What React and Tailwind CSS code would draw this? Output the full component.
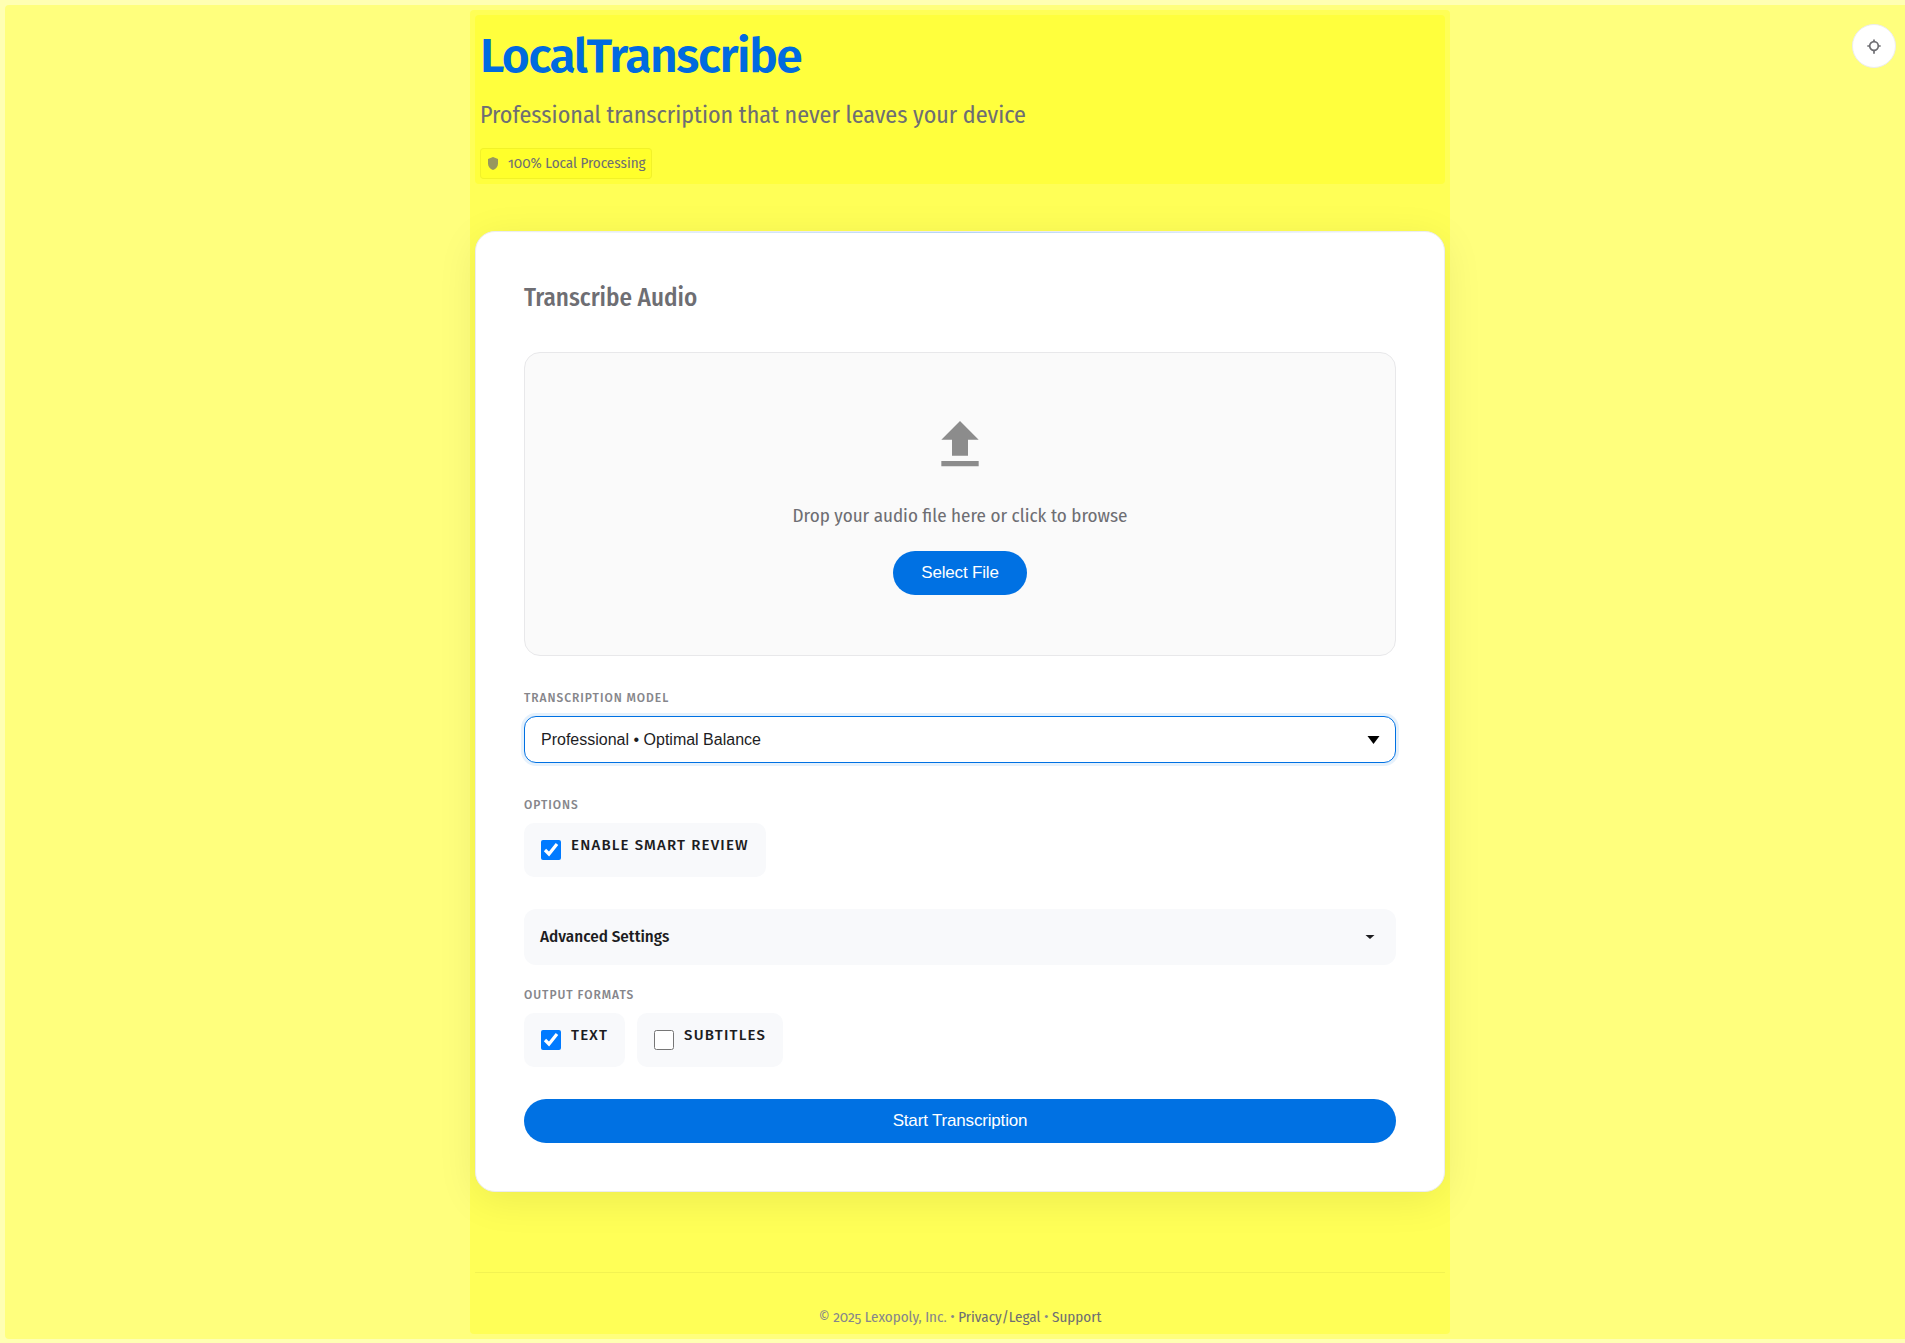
import React from "react";

function FieldLabel({ as: Tag = "span", children, ...rest }) {
  return (
    <Tag
      {...rest}
      className="mb-2 block text-[12px] font-medium uppercase leading-5 tracking-[0.08em] text-[#86868b]"
    >
      {children}
    </Tag>
  );
}

function CheckOption({ label, defaultChecked = false }) {
  return (
    <label className="inline-flex cursor-pointer items-start gap-2.5 rounded-[10px] bg-[#f8f9fb] px-[17px] pb-[17px] pt-3 text-[15px] font-medium uppercase leading-5 tracking-[0.08em] text-[#1d1d1f]">
      <input
        type="checkbox"
        defaultChecked={defaultChecked}
        className="mt-[5px] size-5 shrink-0 accent-[#007aff]"
      />
      {label}
    </label>
  );
}

export default function App() {
  return (
    <div className="overflow-x-clip">
      <div className="-mr-[15px] min-h-screen bg-[#ffffb3] p-[5px] font-['Fira_Sans','Noto_Sans',sans-serif] text-[#1d1d1f]">
        <main className="min-h-[calc(100vh-10px)] rounded bg-[#ffff7d] p-[5px]">
          <button
            type="button"
            aria-label="Toggle theme"
            className="fixed right-[9px] top-6 flex size-11 items-center justify-center rounded-full border border-[#ececf0] bg-white text-[#6e6e73]"
          >
            <svg width="20" height="20" viewBox="0 0 20 20" fill="none" stroke="currentColor" strokeWidth="1.7" aria-hidden="true">
              <circle cx="10" cy="10" r="4.3" />
              <path d="M10 3.4v2.4M10 14.2v3.6M3.3 10h2.6M14.1 10h2.6" />
            </svg>
          </button>

          <div className="mx-auto max-w-[980px] rounded bg-[#ffff57] p-[5px]">
            <header className="mb-[47px] rounded bg-[#ffff3d] p-[5px]">
              <h1 className="text-[48px] font-semibold leading-[72px] tracking-[-0.03em] text-[#006ae0]">
                LocalTranscribe
              </h1>
              <p className="mt-[5px] font-['Fira_Sans_Condensed','Roboto',sans-serif] text-[24px] leading-9 text-[#6e6e73]">
                Professional transcription that never leaves your device
              </p>
              <div className="mt-[15px] inline-flex h-[31px] items-center gap-2.5 rounded border border-black/5 bg-[#ffff2b] pl-[7px] pr-[5px] align-top font-['Fira_Sans_Condensed','Roboto',sans-serif] text-[15px] oldstyle-nums text-[#6e6e73]">
                <svg width="10" height="13" viewBox="0 0 10 13" fill="#98985e" aria-hidden="true">
                  <path d="M5 0l5 2v4.500c0 3-2 5.500-5 6.500-3-1-5-3.500-5-6.500V2z" />
                </svg>
                100% Local Processing
              </div>
            </header>

            <section className="relative rounded-[20px] border border-[#ececf0] bg-white p-12 shadow-[0_8px_40px_rgba(0,0,0,0.08)]">
              <div className="absolute inset-x-0 top-0 mx-5 h-px bg-gradient-to-r from-transparent via-[#0071e3]/30 to-transparent" />
              <h2 className="mb-9 font-['Fira_Sans_Condensed','Roboto',sans-serif] text-[25px] font-medium leading-9 text-[#6e6e73]">
                Transcribe Audio
              </h2>

              <div className="flex flex-col items-center rounded-2xl border border-[#e8e8ea] bg-[#fafafa] py-[60px]">
                <svg width="64" height="64" viewBox="0 0 24 24" fill="#8c8c8c" aria-hidden="true">
                  <path d="M9 16h6v-6h4l-7-7-7 7h4zm-4 2h14v2H5z" />
                </svg>
                <p className="mb-5 mt-6 font-['Fira_Sans_Condensed','Roboto',sans-serif] text-[19px] leading-[30px] text-[#6e6e73]">
                  Drop your audio file here or click to browse
                </p>
                <button
                  type="button"
                  className="h-11 rounded-full bg-[#0071e3] px-7 font-['Liberation_Sans',sans-serif] text-[17px] tracking-[-0.01em] text-white"
                >
                  Select File
                </button>
              </div>

              <div className="mt-8">
                <FieldLabel as="label" htmlFor="model">Transcription Model</FieldLabel>
                <div className="relative">
                  <select
                    id="model"
                    defaultValue="professional"
                    className="block h-[47px] w-full appearance-none rounded-xl border border-[#0071e3] bg-white px-4 font-['Liberation_Sans',sans-serif] text-[16px] text-[#1d1d1f] shadow-[0_0_0_3px_rgba(0,113,227,0.1)] outline-none"
                  >
                    <option value="professional">Professional • Optimal Balance</option>
                  </select>
                  <svg className="pointer-events-none absolute right-4 top-5" width="13" height="8" viewBox="0 0 13 8" aria-hidden="true">
                    <path d="M0.500 0h12L6.500 8z" fill="#000" />
                  </svg>
                </div>
              </div>

              <div className="mt-8">
                <FieldLabel>Options</FieldLabel>
                <div className="flex gap-3">
                  <CheckOption label="Enable Smart Review" defaultChecked />
                </div>
              </div>

              <button
                type="button"
                aria-expanded="false"
                className="mt-8 flex h-14 w-full items-center justify-between rounded-xl bg-[#f8f9fb] pl-4 pr-[21px] font-['Fira_Sans_Condensed','Roboto',sans-serif] text-[17px] font-medium"
              >
                Advanced Settings
                <svg width="10" height="4" viewBox="0 0 10 4" aria-hidden="true">
                  <path d="M0.500 0h9L5 4z" fill="#1d1d1f" />
                </svg>
              </button>

              <div className="mt-5">
                <FieldLabel>Output Formats</FieldLabel>
                <div className="flex flex-wrap gap-3">
                  <CheckOption label="Text" defaultChecked />
                  <CheckOption label="Subtitles" />
                </div>
              </div>

              <button
                type="button"
                className="mt-8 block h-11 w-full rounded-full bg-[#0071e3] font-['Liberation_Sans',sans-serif] text-[17px] tracking-[-0.01em] text-white"
              >
                Start Transcription
              </button>
            </section>

            <footer className="mt-20 border-t border-black/5 pt-8 text-center font-['Fira_Sans_Condensed','Roboto',sans-serif] text-[15px] leading-6 oldstyle-nums text-[#86868b]">
              © 2025 Lexopoly, Inc. • <a href="#privacy" className="text-[#6e6e73]">Privacy/Legal</a> •{" "}
              <a href="#support" className="text-[#6e6e73]">Support</a>
            </footer>
          </div>
        </main>
      </div>
    </div>
  );
}
